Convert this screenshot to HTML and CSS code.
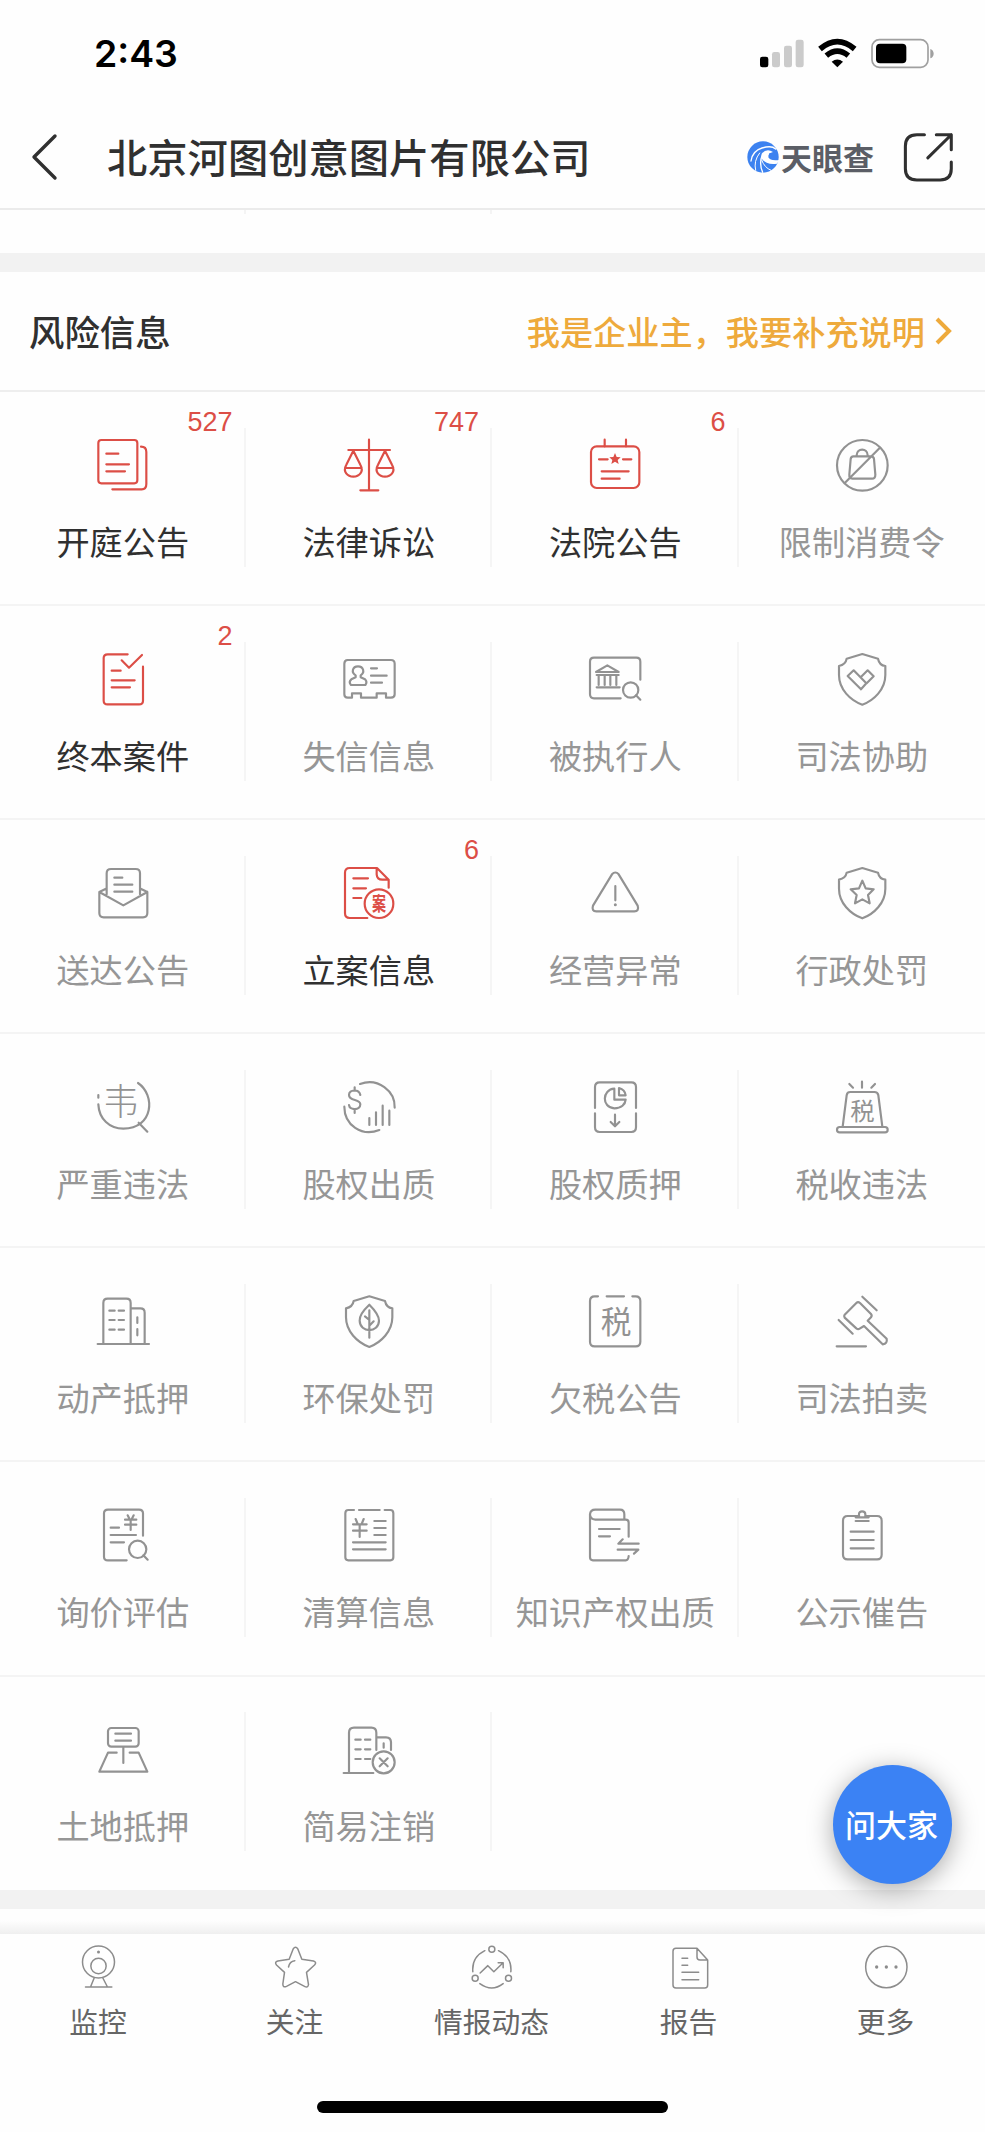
FILE: index.html
```html
<!DOCTYPE html>
<html lang="zh-CN">
<head>
<meta charset="utf-8">
<title>北京河图创意图片有限公司</title>
<link rel="stylesheet" href="styles.css">
</head>
<body>
<div class="screen">
  <div class="status">
    <span class="time">2:43</span>
    <svg class="status-icons" viewBox="110 45 540 110">
      <rect x="119" y="110" width="25" height="32" rx="7"/>
      <g fill="#cbcbcb"><rect x="155" y="96" width="24" height="46" rx="7"/><rect x="191" y="77" width="24" height="65" rx="7"/><rect x="226" y="59" width="24" height="83" rx="7"/></g>
      <path d="M351 142L334 125Q351 112 368 125Z"/>
      <g fill="none" stroke="#000" stroke-width="17"><path d="M318 107Q351 80 384 107"/><path d="M299 87Q351 43 403 87"/></g>
      <rect x="455" y="59" width="168" height="83" rx="22" fill="none" stroke="#a0a0a0" stroke-width="5"/>
      <rect x="467" y="71" width="91" height="59" rx="12"/>
      <path d="M630 87Q640 91 640 101T630 115Z" fill="#a0a0a0"/>
    </svg>
  </div>
  <header class="nav">
    <svg class="back" viewBox="0 0 28 48"><path d="M25 3L4 24L25 45"/></svg>
    <h1 class="title">北京河图创意图片有限公司</h1>
    <div class="brand">
      <svg class="brand-mark" viewBox="80 364 96 96">
        <circle cx="128" cy="412" r="47" fill="#3c82f0"/>
        <g fill="none" stroke="#fff" stroke-linecap="round"><path d="M92 424Q96 394 125 385T166 388" stroke-width="4"/><path d="M106 452Q99 424 118 400" stroke-width="3"/><path d="M127 458Q115 430 126 406" stroke-width="4"/><path d="M152 452Q132 444 124 421" stroke-width="3"/></g>
        <path d="M124 402Q139 385 158 397Q144 400 144 413Q150 425 177 421L170 432Q138 437 123 416Z" fill="#fff"/>
        <path d="M148 400Q164 398 174 415Q163 425 149 416Q142 407 148 400Z" fill="#3c82f0"/>
      </svg>
      <span class="brand-name">天眼查</span>
    </div>
    <svg class="share" viewBox="549 336 150 150"><path d="M612 344H590Q556 344 556 378V444Q556 477 590 477H658Q691 477 691 444V424M647 344H691V388M691 344L622 412"/></svg>
  </header>
  <div class="prev"><i></i><i></i></div>
  <div class="band"></div>
  <div class="section-head">
    <h2>风险信息</h2>
    <a class="supplement">我是企业主，我要补充说明<svg viewBox="0 0 18 32"><path d="M2 4L14 16L2 28"/></svg></a>
  </div>
  <main class="grid">
    <div class="cell on"><b>527</b><svg viewBox="278 133 180 180"><rect x="294" y="148" width="117" height="130" rx="9"/><path d="M318 189H354M318 221H386M318 242H374M422 168Q438 168 438 184V280Q438 296 424 296H336"/></svg><span>开庭公告</span></div>
    <div class="cell on"><b>747</b><svg viewBox="1018 133 180 180"><path d="M1108 147V299M1082 299H1136M1046 178H1171M1061 180L1040 222C1028 244 1044 258 1061 258S1094 244 1082 222ZM1156 180L1135 222C1123 244 1139 258 1156 258S1189 244 1177 222ZM1036 232H1086M1131 232H1181"/></svg><span>法律诉讼</span></div>
    <div class="cell on"><b>6</b><svg viewBox="303 133 180 180"><rect x="321" y="167" width="145" height="125" rx="17"/><path d="M362 147V167M426 147V167M345 206H371M417 206H442M353 242H434M353 264H407"/><path class="solid" d="M393 187L398 199L410 200L401 208L404 220L393 213L382 220L385 208L376 200L388 199Z"/></svg><span>法院公告</span></div>
    <div class="cell"><svg viewBox="1043 133 180 180"><circle cx="1134" cy="224" r="76"/><path d="M1186 172L1082 276M1107 197H1160Q1168 197 1169 205L1173 252Q1173 264 1163 264H1104Q1094 264 1095 252L1099 205Q1100 197 1107 197ZM1117 197V194C1117 171 1150 171 1150 194V197"/></svg><span>限制消费令</span></div>

    <div class="cell on"><b>2</b><svg viewBox="278 131 180 180"><path d="M382 147H322Q310 147 310 158V286Q310 297 322 297H416Q428 297 428 286V184M364 165L386 187L425 149M334 196H361M334 225H403M334 246H389"/></svg><span>终本案件</span></div>
    <div class="cell"><svg viewBox="1018 131 180 180"><path d="M1044 164H1174Q1185 164 1185 175V267Q1185 277 1174 277H1159V264H1131V277H1084V264H1057V277H1044Q1034 277 1034 267V175Q1034 164 1044 164ZM1068 210C1054 202 1058 183 1075 183S1096 202 1083 210V216L1096 222Q1104 230 1097 239H1054Q1046 230 1055 222L1068 216ZM1114 189H1132M1114 211H1161M1114 232H1147"/></svg><span>失信信息</span></div>
    <div class="cell"><svg viewBox="303 131 180 180"><path d="M410 279H330Q318 279 318 267V169Q318 157 330 157H457Q469 157 469 169V223M336 200L370 180L404 200ZM338 246H407M338 209H404M344 209V239M362 209V239M379 209V239M397 209V239"/><circle cx="440" cy="254" r="23"/><path d="M456 270L469 283"/></svg><span>被执行人</span></div>
    <div class="cell"><svg viewBox="1043 131 180 180"><path d="M1134 146L1181 160Q1185 180 1203 182V209C1203 252 1169 285 1134 298C1098 285 1064 252 1064 209V182Q1084 178 1087 160ZM1090 212L1108 195L1146 234L1130 252ZM1129 216L1150 195L1168 213L1147 234"/></svg><span>司法协助</span></div>

    <div class="cell"><svg viewBox="278 774 180 180"><path d="M319 868V805Q319 792 332 792H406Q419 792 419 805V868M297 861L369 901L441 861V924Q441 937 428 937H310Q297 937 297 924ZM297 861L317 851M441 861L421 851M342 818H366M342 839H396M342 860H396"/></svg><span>送达公告</span></div>
    <div class="cell on"><b>6</b><svg viewBox="1018 774 180 180"><path d="M1103 939H1050Q1036 939 1036 925V803Q1036 789 1050 789H1132L1167 824V848M1131 790V808Q1132 824 1148 824H1166M1061 820H1105M1061 850H1099M1061 879H1085"/><circle cx="1138" cy="896" r="43"/><text x="0" y="0" transform="translate(1138 917) scale(.78 1.08)" font-size="54" font-weight="700">案</text></svg><span>立案信息</span></div>
    <div class="cell"><svg viewBox="303 774 180 180"><path d="M384 808Q394 797 404 808L461 902Q466 919 451 919H337Q322 919 327 902ZM394 843V886"/><circle class="solid" cx="394" cy="899" r="4.5"/></svg><span>经营异常</span></div>
    <div class="cell"><svg viewBox="1043 774 180 180"><path d="M1134 789L1181 803Q1185 822 1203 824V851C1203 894 1169 927 1134 940C1098 927 1064 894 1064 851V824Q1084 820 1087 803ZM1134 827L1144 850L1168 853L1151 870L1156 895L1134 883L1112 895L1117 870L1099 853L1124 850Z"/></svg><span>行政处罚</span></div>

    <div class="cell"><svg viewBox="278 126 180 180"><path d="M294 180V188M294 208C296 252 328 281 369 281C460 281 466 180 413 144M415 263L441 290"/><text x="362" y="240" font-size="108" font-weight="300">韦</text></svg><span>严重违法</span></div>
    <div class="cell"><svg viewBox="1018 126 180 180"><path d="M1081 147C1135 127 1187 168 1185 218M1034 215C1034 270 1086 306 1139 285M1082 180C1078 161 1048 163 1048 180C1048 200 1082 190 1082 208C1082 227 1050 227 1048 210M1065 157V167M1065 222V234M1109 249V270M1129 232V270M1149 212V270M1169 227V270"/></svg><span>股权出质</span></div>
    <div class="cell"><svg viewBox="303 126 180 180"><path d="M333 219V156Q333 142 347 142H442Q456 142 456 156V219M333 235V277Q333 291 347 291H442Q456 291 456 277V235M391 161C354 163 352 218 391 220C412 220 424 208 425 194H391ZM405 159V181H425Q423 164 405 159ZM393 239V273M380 261L393 274L406 261"/></svg><span>股权质押</span></div>
    <div class="cell"><svg viewBox="1043 126 180 180"><path d="M1075 275L1087 181Q1088 171 1098 171H1170Q1180 171 1182 181L1194 275M1095 147L1106 158M1133 140V158M1172 147L1161 158"/><rect x="1058" y="276" width="152" height="16" rx="8"/><text x="1134" y="254" font-size="73">税</text></svg><span>税收违法</span></div>

    <div class="cell"><svg viewBox="278 768 180 180"><path d="M292 927H446M309 926V804Q309 791 322 791H378Q391 791 391 804V926M392 820H420Q433 820 433 833V926M327 827H343M355 827H371M327 855H343M355 855H371M327 884H343M355 884H371M411 847V864M411 882V901"/></svg><span>动产抵押</span></div>
    <div class="cell"><svg viewBox="1018 768 180 180"><path d="M1109 784L1156 798Q1160 818 1178 820V847C1178 889 1144 923 1109 936C1073 923 1039 889 1039 847V820Q1059 816 1062 798ZM1109 809Q1078 838 1080 857C1081 895 1137 895 1138 857Q1138 838 1109 809ZM1109 826V908M1096 844L1109 855M1122 859L1109 872"/></svg><span>环保处罚</span></div>
    <div class="cell"><svg viewBox="303 768 180 180"><path d="M342 784H332Q318 784 318 798V920Q318 934 332 934H455Q469 934 469 920V798Q469 784 455 784H445M368 784H420"/><text x="396" y="894" font-size="92">税</text></svg><span>欠税公告</span></div>
    <div class="cell"><svg viewBox="1043 768 180 180"><path d="M1057 934H1145M1134 785L1177 826M1063 855L1105 896M1081 839L1116 804Q1121 799 1127 804L1160 837Q1164 842 1160 847L1150 857L1207 911Q1210 926 1195 928L1139 873L1126 881Q1121 884 1116 880L1081 848Q1078 843 1081 839Z"/></svg><span>司法拍卖</span></div>

    <div class="cell"><svg viewBox="278 121 180 180"><path d="M379 287H323Q311 287 311 276V146Q311 135 323 135H416Q428 135 428 146V213M331 189H356M331 211H407M331 233H371M382 152L388 164M400 152L394 164M374 165H408M374 180H408M391 165V196"/><circle cx="412" cy="254" r="26"/><path d="M429 272L442 285"/></svg><span>询价评估</span></div>
    <div class="cell"><svg viewBox="1018 121 180 180"><path d="M1063 136H1046Q1037 136 1037 146V278Q1037 287 1046 287H1172Q1181 287 1181 278V146Q1181 136 1172 136H1155M1078 136H1140M1068 163L1074 178M1092 163L1086 178M1060 179H1101M1060 198H1101M1080 179V217M1124 169H1158M1124 190H1158M1124 211H1158M1060 233H1158M1060 254H1158"/></svg><span>清算信息</span></div>
    <div class="cell"><svg viewBox="303 121 180 180"><path d="M434 216V174Q434 165 425 165H334Q318 164 318 149Q319 135 334 135H408Q421 135 421 149V165M318 149V278Q318 287 327 287H425Q433 287 434 274M345 193H407M345 215H378M464 237H403L416 224M401 255H463L450 267"/></svg><span>知识产权出质</span></div>
    <div class="cell"><svg viewBox="1043 121 180 180"><path d="M1122 154H1090Q1076 154 1076 168V270Q1076 284 1090 284H1178Q1192 284 1192 270V168Q1192 154 1178 154H1145M1124 157V149C1123 137 1143 137 1143 149V157M1114 158H1153M1114 169H1153M1099 201H1168M1099 226H1168M1099 251H1168"/></svg><span>公示催告</span></div>

    <div class="cell"><svg viewBox="278 763 180 180"><rect x="323" y="790" width="92" height="56" rx="10"/><path d="M345 807H392M345 828H392M369 847V895M349 864H323L297 921H441L415 864H388"/></svg><span>土地抵押</span></div>
    <div class="cell"><svg viewBox="1018 763 180 180"><path d="M1032 925H1121M1048 924V804Q1048 789 1063 789H1115Q1130 789 1130 804V856M1131 818H1159Q1174 818 1174 833V856M1067 825H1083M1096 825H1112M1067 854H1083M1096 854H1112M1067 883H1083M1096 883H1112M1152 836V849M1140 881L1164 905M1164 881L1140 905"/><circle cx="1152" cy="893" r="33"/></svg><span>简易注销</span></div>
  </main>
  <div class="band"></div>
  <div class="next"></div>
  <nav class="tabs">
    <div class="tab"><svg viewBox="40.5 128 150 150"><circle cx="117" cy="188" r="48"/><circle cx="117" cy="200" r="23"/><circle class="solid" cx="117" cy="158" r="4.5"/><path d="M104 236L93 263M130 236L144 263M78 263H157"/></svg><span>监控</span></div>
    <div class="tab"><svg viewBox="631.5 128 150 150"><path d="M701 149Q708 138 715 149L727 180L762 185Q773 189 765 197L741 219L747 256Q745 267 735 261L708 247L681 261Q670 266 670 254L675 219L651 197Q644 188 655 185L689 180ZM687 203Q690 186 706 184"/></svg><span>关注</span></div>
    <div class="tab"><svg viewBox="1222.5 128 150 150"><circle cx="1297" cy="150" r="9"/><circle cx="1247" cy="237" r="9"/><circle cx="1347" cy="237" r="9"/><path d="M1276 154Q1236 174 1240 217M1317 154Q1358 174 1354 217M1261 253Q1297 279 1331 253M1262 221L1285 199L1303 217L1330 191M1316 190H1331V205"/></svg><span>情报动态</span></div>
    <div class="tab"><svg viewBox="-75 -75 150 150"><path d="M24 -56H-39Q-48 -56 -48 -47V54Q-48 63 -39 63H47Q56 63 56 54V-21ZM24 -56V-30Q24 -21 33 -21H56M-21 -26H-4M-21 -5H-4M-21 16H29M-21 38H29"/></svg><span>报告</span></div>
    <div class="tab"><svg viewBox="-75 -75 150 150"><circle cx="1" cy="0" r="62"/><g class="solid"><circle cx="-28" cy="0" r="5"/><circle cx="1" cy="0" r="5"/><circle cx="30" cy="0" r="5"/></g></svg><span>更多</span></div>
  </nav>
  <div class="home"></div>
  <button class="ask">问大家</button>
</div>
</body>
</html>
```
FILE: styles.css
```css
* { box-sizing: border-box; }
body { margin: 0; background: #fefefe; font-family: "Noto Sans CJK SC", sans-serif; color: #303030; }
.screen { position: relative; width: 985px; height: 2132px; overflow: hidden; display: flex; flex-direction: column; }
.screen > * { flex-shrink: 0; }
h1, h2 { margin: 0; font-weight: 500; }
svg { display: block; flex-shrink: 0; overflow: visible; }

.status { height: 106px; padding: 1px 48px 0 94px; display: flex; justify-content: space-between; align-items: center; }
.time { font: 600 37.4px/44px Inter, sans-serif; color: #000; }
.status-icons { width: 180px; height: 36.7px; }

.nav { height: 104px; display: flex; align-items: center; padding: 0 31px 0 30px; border-bottom: 2px solid #ebebeb; }
.back { width: 28px; height: 48px; fill: none; stroke: #303030; stroke-width: 3.4; stroke-linecap: round; stroke-linejoin: round; }
.title { font-size: 40.3px; line-height: 56px; margin: -2px 0 0 49px; white-space: nowrap; }
.brand { margin-left: auto; display: flex; align-items: center; gap: 2px; }
.brand-mark { width: 32px; height: 32px; }
.brand-name { font-size: 31px; line-height: 40px; font-weight: 700; color: #5b5e66; }
.share { width: 51px; height: 51px; margin-left: 29px; fill: none; stroke: #303030; stroke-width: 9; stroke-linecap: round; stroke-linejoin: round; }

.prev { height: 43px; display: grid; grid-template-columns: 246px 246px; }
.prev i { height: 4px; border-right: 2px solid #f4f4f4; }
.band { height: 19px; background: #f2f2f2; }
.section-head { height: 120px; padding: 0 32px 0 29px; display: flex; align-items: center; justify-content: space-between; border-bottom: 2px solid #eee; }
.section-head h2 { font-size: 35.4px; line-height: 50px; }
.supplement { display: flex; align-items: center; gap: 10px; font-size: 33.2px; line-height: 48px; font-weight: 500; color: #eeaa3c; }
.supplement svg { width: 18px; height: 32px; fill: none; stroke: #eeaa3c; stroke-width: 4; }

.grid { display: grid; grid-template-columns: 245.5px repeat(3, 246.5px); grid-auto-rows: 214.1px; height: 1498px; }
.cell { position: relative; display: flex; flex-direction: column; align-items: center; padding-top: 42.5px; color: #929292; border-bottom: 2px solid #f4f4f4; }
.cell:nth-last-child(-n+2) { border-bottom: 0; }
.cell svg { width: 60px; height: 60px; fill: none; stroke: currentColor; stroke-width: 6.5; stroke-linecap: round; stroke-linejoin: round; }
.cell > span { font-size: 33.2px; line-height: 40px; margin-top: 26px; white-space: nowrap; color: #969696; font-weight: 400; }
.cell.on { color: #dc4e46; }
.cell.on > span { color: #303030; }
.cell > b { position: absolute; top: 12.5px; right: 13px; font: 400 27px/34px "Liberation Sans", sans-serif; }
.cell:not(:nth-child(4n))::after { content: ""; position: absolute; right: 0; top: 35.5px; width: 2px; height: 139px; background: #f5f5f5; }
svg .solid { fill: currentColor; stroke: none; }
svg text { font-family: "Noto Sans CJK SC", sans-serif; fill: currentColor; stroke: none; text-anchor: middle; }

.next { height: 25px; background: linear-gradient(#fefefe 45%, #efefef); }
.tabs { height: 120px; padding-top: 8px; display: grid; grid-template-columns: 196px repeat(4, 197px); }
.tab { display: flex; flex-direction: column; align-items: center; color: #8c8c8c; }
.tab svg { width: 50px; height: 50px; fill: none; stroke: currentColor; stroke-width: 4.5; stroke-linecap: round; stroke-linejoin: round; }
.tab span { font-size: 28.8px; line-height: 36px; margin-top: 11px; color: #666; }
.home { width: 351px; height: 12px; border-radius: 6px; background: #000; margin: 47px auto 0; }

.ask { position: absolute; left: 832.5px; top: 1765px; width: 119px; height: 119px; border: 0; border-radius: 50%; padding: 0 1px 2px 0; background: #3b82f4; color: #fff; font: 500 31px/40px "Noto Sans CJK SC", sans-serif; box-shadow: 0 5px 26px rgba(0, 0, 0, .34); white-space: nowrap; }
```
